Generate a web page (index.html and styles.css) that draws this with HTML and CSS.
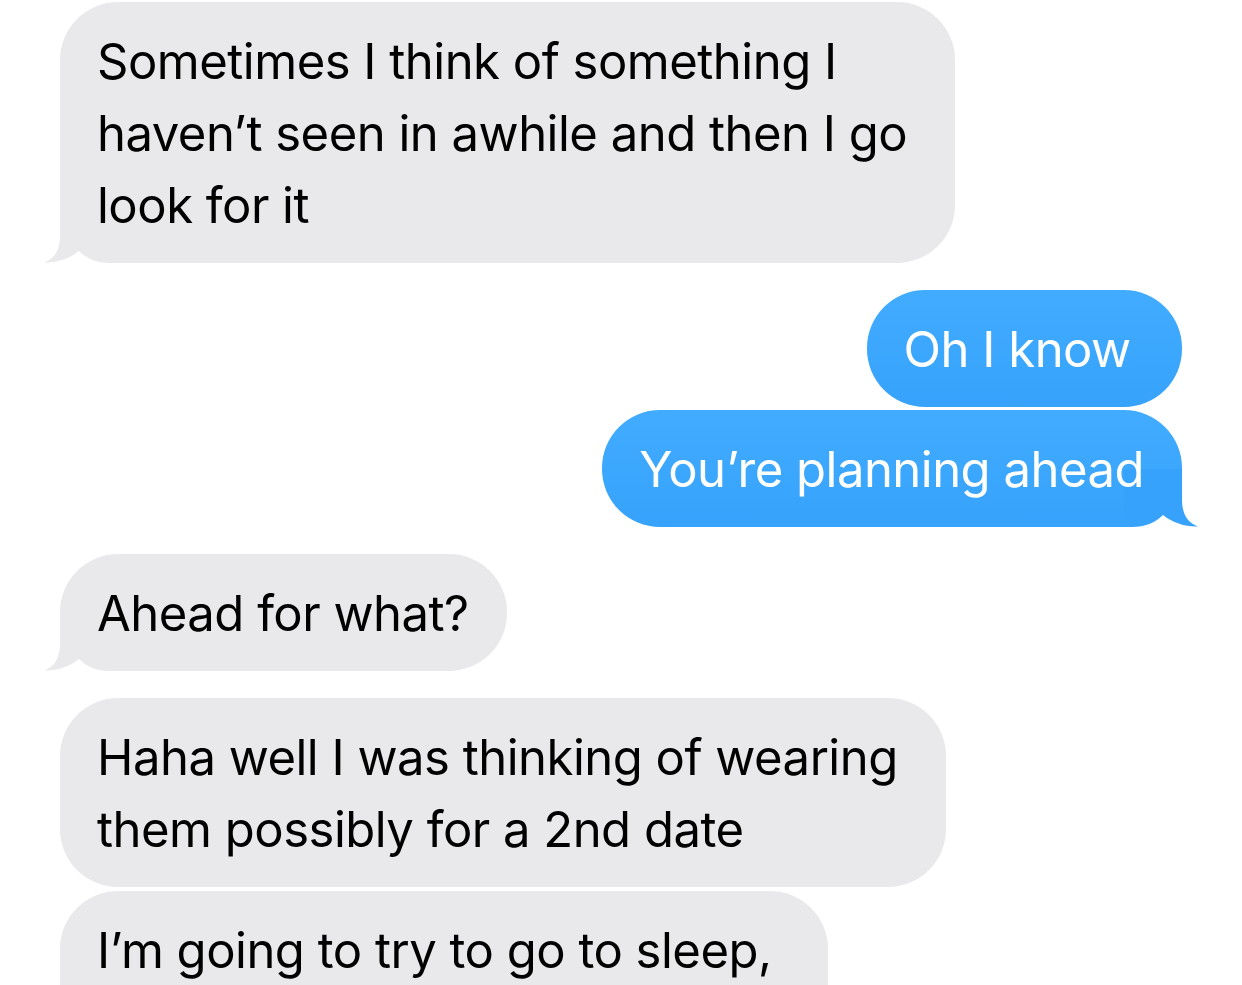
FILE: index.html
```html
<!DOCTYPE html>
<html lang="en">
<head>
<meta charset="utf-8">
<title>Messages</title>
<link rel="stylesheet" href="styles.css">
</head>
<body>
<main class="thread">
  <div class="bubble recv wide group-end">
    Sometimes I think of something I<br>haven’t seen in awhile and then I go<br>look for it
    <svg class="tail" viewBox="0 0 74 58" width="74" height="58" aria-hidden="true"><path d="M16 0 L16 30 C16 46 10 54 0 57.5 C12 58 25 54 35 46 C43 54 53 58 66 58 L74 58 L74 0 Z"/></svg>
  </div>
  <div class="bubble sent">Oh I know&nbsp;</div>
  <div class="bubble sent group-end">
    You’re planning ahead
    <svg class="tail" viewBox="0 0 74 58" width="74" height="58" aria-hidden="true"><path d="M16 0 L16 30 C16 46 10 54 0 57.5 C12 58 25 54 35 46 C43 54 53 58 66 58 L74 58 L74 0 Z"/></svg>
  </div>
  <div class="bubble recv group-end">
    Ahead for what?
    <svg class="tail" viewBox="0 0 74 58" width="74" height="58" aria-hidden="true"><path d="M16 0 L16 30 C16 46 10 54 0 57.5 C12 58 25 54 35 46 C43 54 53 58 66 58 L74 58 L74 0 Z"/></svg>
  </div>
  <div class="bubble recv wide">Haha well I was thinking of wearing<br>them possibly for a 2nd date</div>
  <div class="bubble recv last">I’m going to try to go to sleep,</div>
</main>
</body>
</html>
```
FILE: styles.css
```css
html, body {
  margin: 0;
  padding: 0;
  background: #ffffff;
  overflow: hidden;
  height: 985px;
}

.thread {
  display: flex;
  flex-direction: column;
  padding-top: 2px;
  font-family: Inter, "Noto Sans", "Liberation Sans", sans-serif;
  font-size: 49px;
  letter-spacing: -0.5px;
  line-height: 72px;
}

.bubble {
  position: relative;
  z-index: 0;
  width: fit-content;
  padding: 24px 38px 21px 37px;
  border-radius: 58px;
  white-space: nowrap;
}

.bubble.wide {
  padding-right: 48px;
}

.bubble.last {
  padding-right: 56px;
  padding-bottom: 60px;
}

.recv {
  align-self: flex-start;
  margin-left: 60px;
  background: #e9e9eb;
  color: #000000;
}

.sent {
  align-self: flex-end;
  margin-right: 60px;
  background: linear-gradient(#41acff, #36a2fb);
  color: #ffffff;
}

.bubble + .bubble {
  margin-top: 4px;
}

.bubble.sent + .bubble.sent {
  margin-top: 3px;
}

.group-end + .bubble {
  margin-top: 27px;
}

.tail {
  position: absolute;
  z-index: -1;
  bottom: 0;
  display: block;
}

.recv .tail {
  left: -16px;
  fill: #e9e9eb;
}

.sent .tail {
  right: -16px;
  fill: #36a2fb;
  transform: scaleX(-1);
}
```
